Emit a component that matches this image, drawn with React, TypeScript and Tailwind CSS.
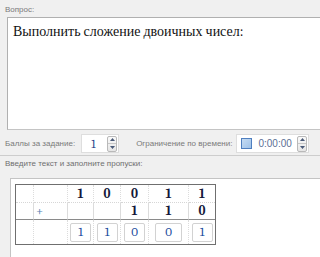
import React from "react";

const cols = [18, 34, 26, 27, 28, 40, 26];

function Spinner() {
  return (
    <div className="flex flex-col w-[10px] h-[16px] border border-[#b9b9b9] rounded-[2px] bg-gradient-to-b from-[#fafafa] to-[#e6e6e6]">
      <div className="flex-1 flex items-center justify-center border-b border-[#c8c8c8]">
        <svg width="5" height="3" viewBox="0 0 5 3">
          <path d="M0 3 L2.5 0 L5 3 Z" fill="#4a5a78" />
        </svg>
      </div>
      <div className="flex-1 flex items-center justify-center">
        <svg width="5" height="3" viewBox="0 0 5 3">
          <path d="M0 0 L2.5 3 L5 0 Z" fill="#4a5a78" />
        </svg>
      </div>
    </div>
  );
}

function Cell({
  col,
  row,
  children,
}: {
  col: number;
  row: number;
  children?: React.ReactNode;
}) {
  const last = col === cols.length - 1;
  const borderB =
    row === 0
      ? "border-b border-dotted border-b-[#d6d6d6]"
      : row === 1
        ? "border-b border-solid border-b-[#8a8a8a]"
        : "";
  return (
    <div
      className={`flex items-center justify-center ${borderB} ${
        last ? "" : "border-r border-r-[#dcdcdc] border-dotted"
      }`}
    >
      {children}
    </div>
  );
}

const top = ["", "", "1", "0", "0", "1", "1"];
const second = ["", "+", "", "", "1", "1", "0"];
const answer = ["", "", "1", "1", "0", "0", "1"];

export default function App() {
  return (
    <div className="w-[320px] h-[257px] bg-[#f0f0f0] overflow-hidden text-[#7a7a7a]">
      <div className="font-['Liberation_Sans'] pl-[5px] pt-[5px] h-[17px] text-[8px] leading-[10px]">Вопрос:</div>
      <div className="ml-[7px] h-[113px] bg-white border border-r-0 border-[#b0b0b0] border-b-[#c4c4c4] pl-[5px] pt-[5px] text-[14px] leading-[18px] text-[#111]">
        <p className="font-serif">Выполнить сложение двоичных чисел:</p>
      </div>

      <div className="font-['Liberation_Sans'] mt-[3px] h-[21px] flex items-center pl-[5px] text-[8px]">
        <span>Баллы за задание:</span>
        <div className="ml-[6px] w-[38px] h-[19px] bg-white border border-[#dedede] flex items-center pl-[9px] pr-[1px]">
          <span className="flex-1 font-serif text-[12px] text-[#2a3f8a]">1</span>
          <Spinner />
        </div>
        <span className="ml-[17px]">Ограничение по времени:</span>
        <div className="ml-[4px] w-[73px] h-[19px] bg-white border border-[#dedede] flex items-center pl-[4px] pr-[1px]">
          <div className="w-[11px] h-[11px] border border-[#4f7fbf] bg-gradient-to-br from-[#c6dcf3] to-[#9fc2e8]" />
          <span className="flex-1 ml-[6px] text-[10px] text-[#5c6f95]">0:00:00</span>
          <Spinner />
        </div>
      </div>

      <div className="mt-[1px] border-t border-[#cdcdcd]" />
      <div className="font-['Liberation_Sans'] pl-[5px] pt-[3px] h-[22px] text-[8px] leading-[10px] text-[#6f6f6f]">
        Введите текст и заполните пропуски:
      </div>

      <div className="ml-[10px] h-[90px] bg-white border-t border-l border-[#c4c4c4] pl-[4px] pt-[5px]">
        <div className="font-serif grid w-fit border border-[#6f6f6f] grid-cols-[18px_34px_26px_27px_28px_40px_26px] grid-rows-[18px_17px_24px] text-[13px]">
          {top.map((d, i) => (
            <Cell key={"a" + i} col={i} row={0}>
              <span className="font-bold text-[#14183a]">{d}</span>
            </Cell>
          ))}
          {second.map((d, i) => (
            <Cell key={"b" + i} col={i} row={1}>
              {i === 1 ? (
                <span className="w-full pl-[2px] text-[#5b7fb2] text-[13px]">{d}</span>
              ) : (
                <span className="font-bold text-[#14183a]">{d}</span>
              )}
            </Cell>
          ))}
          {answer.map((d, i) => (
            <Cell key={"c" + i} col={i} row={2}>
              {d && (
                <div
                  className={`h-[19px] ${
                    i === 5 ? "w-[27px]" : "w-[21px]"
                  } border border-[#d2d2d2] rounded-[2px] flex items-center justify-center text-[#1f4f9f]`}
                >
                  {d}
                </div>
              )}
            </Cell>
          ))}
        </div>
      </div>
    </div>
  );
}
